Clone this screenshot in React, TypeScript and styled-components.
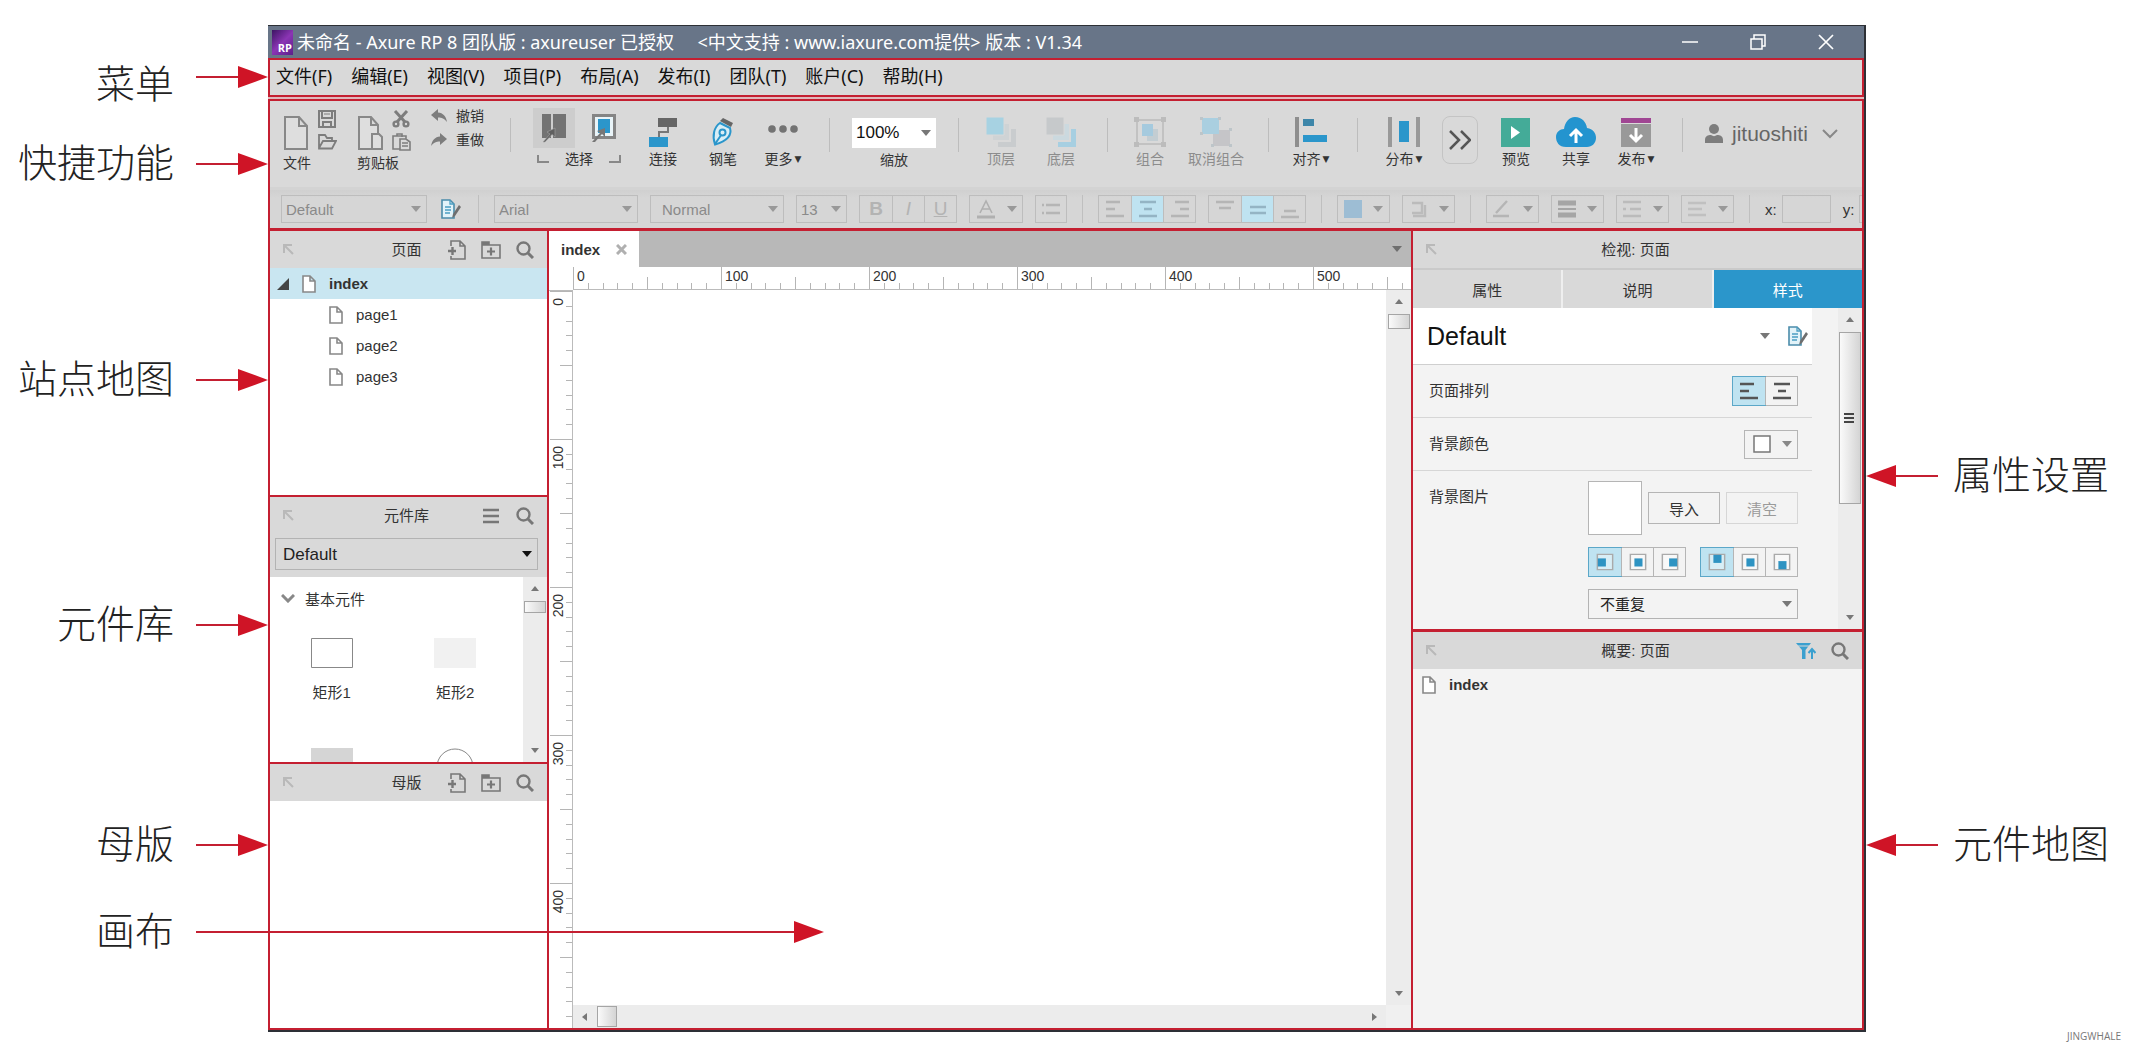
import React from 'react';
import styled, { createGlobalStyle, css } from 'styled-components';

const RED = '#c41f31';
const ARROW_RED = '#cf1426';
const BLUE = '#2b96cb';
const GRAY = '#7d7d7d';
const UI_FONT = '"Liberation Sans", "Noto Sans CJK SC", sans-serif';
const SYSTEM_FONT = '"Noto Sans", "Noto Sans CJK SC", sans-serif';

const GlobalStyle = createGlobalStyle`
  * { box-sizing: border-box; }
  body { margin: 0; background: #fff; color: #333; font-family: ${UI_FONT}; font-size: 15px; }
  button, input, select { font: inherit; color: inherit; margin: 0; padding: 0; border: 0; background: none; border-radius: 0; }
  button { display: inline-flex; align-items: center; justify-content: center; }
  svg { display: block; flex: none; }
  h2, ul { margin: 0; padding: 0; list-style: none; font-weight: normal; }
`;

/* ---------- page and callouts ---------- */

const Page = styled.div`
  display: grid;
  grid-template-columns: 268px minmax(0, 1fr) 264px;
  min-height: 100vh;
  padding-top: 25px;
`;

const CalloutList = styled.aside`
  display: flex;
  flex-direction: column;
`;

const Callout = styled.div<{ $gap: number; $side?: 'left' | 'right' }>`
  display: flex;
  align-items: center;
  height: 56px;
  margin-top: ${p => p.$gap}px;
  flex: none;
  flex-direction: ${p => (p.$side === 'right' ? 'row-reverse' : 'row')};
  justify-content: flex-end;
  gap: ${p => (p.$side === 'right' ? 15 : 22)}px;
  white-space: nowrap;
`;

const CalloutLabel = styled.span<{ $low?: boolean }>`
  flex: 1;
  padding: ${p => (p.$low ? '8px 0 0' : '0 0 8px')};
  font: 300 39px/48px "Noto Sans CJK SC", sans-serif;
  color: #222;
  text-align: right;
  ${CalloutList}:last-of-type & { text-align: left; }
`;

const Reach = styled.span`
  width: 72px;
  flex: none;
  position: relative;
  z-index: 2;
  display: flex;
  pointer-events: none;
`;

const Shaft = styled.span<{ $length: number }>`
  width: ${p => p.$length}px;
  height: 2px;
  flex: none;
  align-self: center;
  background: ${RED};
`;

function Arrow({ length = 42, back = false }: { length?: number; back?: boolean }) {
  const head = (
    <svg width="30" height="22" viewBox="0 0 30 22">
      <path d={back ? 'M30 0V22L0 11z' : 'M0 0V22L30 11z'} fill={ARROW_RED} />
    </svg>
  );
  return (
    <Reach>
      {back && head}
      <Shaft $length={length} />
      {!back && head}
    </Reach>
  );
}

const Credit = styled.footer`
  margin: auto 9px 7px 0;
  text-align: right;
  font: 10px/14px "Open Sans", sans-serif;
  color: #777;
`;

/* ---------- application window ---------- */

const Window = styled.main`
  display: flex;
  flex-direction: column;
  min-width: 0;
  margin-bottom: 18px;
  border: solid #2d3036;
  border-width: 1px 2px 2px 0;
  background: #dfb9bc;
`;

const TitleBar = styled.header`
  display: flex;
  align-items: center;
  gap: 4px;
  height: 32px;
  flex: none;
  padding: 0 28px 0 4px;
  background: #687588;
  color: #fff;
  font: 18px/32px ${SYSTEM_FONT};
  white-space: pre;
`;

const WindowButtons = styled.div`
  display: flex;
  gap: 48px;
  margin-left: auto;
  button { width: 20px; height: 32px; }
`;

const AppBadge = styled.span`
  display: flex;
  align-items: flex-end;
  justify-content: flex-end;
  width: 21px;
  height: 25px;
  padding-right: 1px;
  background: linear-gradient(135deg, #3c1463, #8b35b4 50%, #5c1f8b);
  font: 700 11px/15px "Open Sans", sans-serif;
`;

const MenuBar = styled.nav`
  display: flex;
  align-items: center;
  gap: 19px;
  height: 39px;
  flex: none;
  margin-bottom: 2px;
  padding: 0 6px 4px;
  border: 2px solid ${RED};
  background: #d9d9d9;
  color: #111;
  font: 18px/24px ${SYSTEM_FONT};
  white-space: nowrap;
`;

const Toolbars = styled.section`
  flex: none;
  border: solid ${RED};
  border-width: 2px 2px 0;
  background: #d9d9d9;
  overflow: hidden;
  white-space: nowrap;
`;

const ToolRow = styled.div`
  display: flex;
  height: 86px;
  padding: 7px 16px 0 13px;
  font-size: 14px;
  line-height: 16px;
`;

const Divider = styled.i<{ $before: number; $after: number }>`
  flex: none;
  width: 1px;
  height: 34px;
  margin: 10px ${p => p.$after}px 0 ${p => p.$before}px;
  background: #bdbdbd;
`;

const Tool = styled.button<{ $wide?: boolean }>`
  flex: none;
  flex-direction: column;
  justify-content: flex-start;
  gap: 4px;
  width: ${p => (p.$wide ? 72 : 60)}px;
  height: 72px;
  padding-top: 9px;
  &:disabled { color: #8c8c8c; }
`;

const Caret = styled.span`
  margin-left: 2px;
  font: 9px/16px "DejaVu Sans", sans-serif;
`;

const ToolLabel = styled.span`
  display: flex;
`;

const FileCluster = styled.div`
  display: grid;
  grid-template-columns: 26px 20px;
  column-gap: 8px;
  flex: none;
  height: 72px;
  margin-right: 20px;
  grid-template-rows: 22px 24px 18px;
  align-items: center;
  > :first-child { grid-row: 1 / 3; align-self: end; height: 42px; }
  > :last-child { grid-column: 1 / 3; line-height: 18px; }
`;

const UndoColumn = styled.div`
  display: flex;
  flex-direction: column;
  gap: 8px;
  flex: none;
  width: 57px;
  button { gap: 9px; height: 16px; justify-content: flex-start; }
`;

const SelectModes = styled.fieldset`
  display: grid;
  grid-template-columns: 42px 42px;
  grid-template-rows: 40px 22px;
  justify-content: space-between;
  flex: none;
  width: 92px;
  margin: 0 8px 0 0;
  padding: 0;
  border: 0;
`;

const ModeButton = styled.button<{ $on?: boolean }>`
  height: 40px;
  background: ${p => (p.$on ? '#cdcdcd' : 'transparent')};
`;

const ModeLabel = styled.span`
  grid-column: 1 / 3;
  display: flex;
  align-items: center;
  justify-content: space-between;
  padding: 0 4px;
  line-height: 22px;
`;

const ZoomField = styled.label`
  display: flex;
  flex-direction: column;
  align-items: center;
  gap: 4px;
  flex: none;
  width: 84px;
  padding-top: 10px;
`;

const MoreTools = styled.button`
  flex: none;
  width: 36px;
  height: 48px;
  margin: 8px 8px 0;
  border: 1px solid #c4c4c4;
  border-radius: 8px;
`;

const Account = styled.button`
  gap: 9px;
  height: 52px;
  color: #666;
  font-size: 21px;
  svg:last-child { margin-left: 5px; }
`;

/* ---------- format row ---------- */

const FormatRow = styled.div`
  display: flex;
  align-items: center;
  gap: 12px;
  height: 41px;
  padding-left: 11px;
  border-top: 3px solid #d3d3d3;
  background: linear-gradient(#d0d0d0, #d6d6d6 8px);
  > * { flex: none; }
`;

const FormatDivider = styled.i`
  width: 1px;
  height: 28px;
  margin: 0 3px;
  background: #bfbfbf;
`;

const SelectBox = styled.span<{ $w?: number; $h: number; $tone: 'flat' | 'light' | 'plain'; $pad: number; $size?: number }>`
  display: grid;
  align-items: center;
  width: ${p => (p.$w ? `${p.$w}px` : '100%')};
  height: ${p => p.$h}px;
  font-size: ${p => p.$size || 15}px;
  ${p => p.$tone === 'flat' && css`border: 1px solid #bdbdbd; color: #8a8a8a;`}
  ${p => p.$tone === 'light' && css`background: #fff; color: #111;`}
  ${p => p.$tone === 'plain' && css`border: 1px solid #b3b3b3; color: #222;`}
  select {
    grid-area: 1 / 1;
    width: 100%;
    height: 100%;
    padding-left: ${p => p.$pad}px;
    appearance: none;
    opacity: 1;
  }
  svg { grid-area: 1 / 1; justify-self: end; margin-right: 5px; pointer-events: none; }
`;

function Dropdown(props: { label: string; value: string; w?: number; h?: number; tone?: 'flat' | 'light' | 'plain'; pad?: number; size?: number; arrow?: string; disabled?: boolean }) {
  return (
    <SelectBox $w={props.w} $h={props.h || 28} $tone={props.tone || 'flat'} $pad={props.pad ?? 4} $size={props.size}>
      <select aria-label={props.label} disabled={props.disabled} defaultValue={props.value}>
        <option>{props.value}</option>
      </select>
      <Down color={props.arrow || '#999'} />
    </SelectBox>
  );
}

const Segments = styled.div<{ $cell: number; $h: number; $border: string }>`
  display: flex;
  height: ${p => p.$h}px;
  border: 1px solid ${p => p.$border};
  button { width: ${p => p.$cell}px; height: 100%; }
  button + button { border-left: 1px solid ${p => p.$border}; }
`;

const Segment = styled.button<{ $on?: boolean; $outlined?: boolean }>`
  background: ${p => (p.$on ? '#bfe3f1' : 'transparent')};
  box-shadow: ${p => (p.$on && p.$outlined ? '0 0 0 1px #5ba7c8' : 'none')};
  font: 400 19px/24px ${UI_FONT};
  color: #b3b3b3;
`;

const FormatButton = styled.button<{ $w: number; $frame?: boolean }>`
  width: ${p => p.$w}px;
  height: 28px;
  border: ${p => (p.$frame ? '1px solid #bdbdbd' : '0')};
  justify-content: space-around;
`;

const Coordinate = styled.label`
  display: flex;
  align-items: center;
  gap: 5px;
  input { width: 49px; height: 28px; border: 1px solid #bdbdbd; }
`;

/* ---------- work area ---------- */

const Body = styled.div`
  flex: 1;
  display: grid;
  grid-template-columns: 277px minmax(0, 1fr) 449px;
  gap: 2px;
  min-height: 0;
  border: 2px solid ${RED};
  border-top-width: 3px;
  background: ${RED};
`;

const LeftColumn = styled.div`
  display: grid;
  grid-template-rows: 264px 265px minmax(200px, 1fr);
  gap: 2px;
`;

const RightColumn = styled.div`
  display: grid;
  grid-template-rows: 398px minmax(200px, 1fr);
  gap: 3px;
`;

const Panel = styled.section<{ $gray?: boolean }>`
  display: flex;
  flex-direction: column;
  min-height: 0;
  overflow: hidden;
  background: ${p => (p.$gray ? '#f3f3f3' : '#fff')};
`;

const PanelHeader = styled.header`
  display: grid;
  grid-template-columns: 22px 1fr 22px;
  align-items: center;
  flex: none;
  height: 37px;
  padding: 0 12px 0 8px;
  background: #d9d9d9;
  h2 { grid-area: 1 / 2; font-size: 15px; line-height: 22px; text-align: center; }
  > button { grid-area: 1 / 1; }
`;

const HeaderActions = styled.div`
  grid-area: 1 / 2 / 2 / 4;
  justify-self: end;
  display: flex;
  gap: 14px;
  button { width: 20px; height: 24px; }
`;

const TreeItem = styled.li<{ $depth: number; $on?: boolean }>`
  display: flex;
  align-items: center;
  gap: 13px;
  height: 31px;
  padding-left: ${p => (p.$depth ? 59 : 7)}px;
  background: ${p => (p.$on ? '#c9e6f1' : 'transparent')};
  font-weight: ${p => (p.$on ? 700 : 400)};
`;

const LibraryPicker = styled.div`
  flex: none;
  height: 43px;
  padding: 4px 9px 0 5px;
  background: #d9d9d9;
`;

const LibraryBody = styled.div`
  display: flex;
  flex: 1;
  min-height: 0;
`;

const Shapes = styled.div`
  flex: 1;
  display: grid;
  grid-template-columns: 1fr 1fr;
  grid-template-rows: 42px 110px 60px;
  overflow: hidden;
`;

const ShapeGroup = styled.button`
  grid-column: 1 / 3;
  justify-content: flex-start;
  gap: 10px;
  padding-left: 11px;
`;

const Shape = styled.button`
  flex-direction: column;
  justify-content: flex-start;
  gap: 14px;
  padding: 19px 3px 0 0;
  line-height: 22px;
  &:nth-child(odd) { padding-right: 9px; }
`;

const Track = styled.div<{ $horizontal?: boolean }>`
  display: flex;
  flex-direction: ${p => (p.$horizontal ? 'row' : 'column')};
  align-items: center;
  flex: none;
  ${p => (p.$horizontal ? 'height: 23px; padding: 0 8px;' : 'width: 24px; padding: 8px 0;')}
  gap: 8px;
  background: #ececec;
  > :last-child { margin-${p => (p.$horizontal ? 'left' : 'top')}: auto; }
`;

const Thumb = styled.i<{ $w: number; $h: number }>`
  display: flex;
  align-items: center;
  justify-content: center;
  flex: none;
  width: ${p => p.$w}px;
  height: ${p => p.$h}px;
  border: 1px solid #a5a5a5;
  background: linear-gradient(90deg, #fafafa, #d4d4d4);
`;

/* ---------- canvas ---------- */

const TabStrip = styled.div`
  display: flex;
  flex: none;
  height: 36px;
  padding-right: 8px;
  background: #b8b8b8;
  align-items: center;
  justify-content: space-between;
`;

const DocumentTab = styled.div`
  display: flex;
  align-items: center;
  gap: 16px;
  width: 90px;
  height: 36px;
  padding-left: 12px;
  background: #fff;
  font-weight: 700;
`;

const CanvasGrid = styled.div`
  flex: 1;
  display: grid;
  grid-template: 23px minmax(0, 1fr) 23px / 24px minmax(0, 1fr) 25px;
  min-height: 0;
`;

const TopRuler = styled.div`
  grid-area: 1 / 2 / 2 / 4;
  display: flex;
  overflow: hidden;
  border-bottom: 1px solid #bbb;
`;

const SideRuler = styled.div`
  grid-area: 2 / 1 / 4 / 2;
  display: flex;
  flex-direction: column;
  height: 0;
  min-height: 100%;
  overflow: hidden;
  border-right: 1px solid #bbb;
  border-top: 1px solid #bbb;
`;

const RulerCell = styled.div<{ $side?: boolean }>`
  display: grid;
  flex: none;
  width: ${p => (p.$side ? 23 : 148)}px;
  height: ${p => (p.$side ? 148 : 22)}px;
  svg, span { grid-area: 1 / 1; }
  span {
    font-size: 14px;
    line-height: 18px;
    ${p => (p.$side
      ? 'writing-mode: vertical-rl; transform: rotate(180deg); justify-self: start; align-self: start; padding-bottom: 7px;'
      : 'padding-left: 4px;')}
  }
`;

const tickLength = (i: number) => (i === 0 ? 22 : i === 5 ? 12 : 6);

function Ruler({ side, marks }: { side?: boolean; marks: number[] }) {
  const Frame = side ? SideRuler : TopRuler;
  const path = Array.from({ length: 10 }, (_, i) => {
    const at = Math.round(i * 14.8) + 0.5;
    return side ? `M${23 - tickLength(i)} ${at}H23` : `M${at} ${22 - tickLength(i)}V22`;
  }).join('');
  return (
    <Frame>
      {marks.map(m => (
        <RulerCell key={m} $side={side}>
          <svg width={side ? 23 : 148} height={side ? 148 : 22}>
            <path d={path} stroke="#b5b5b5" />
          </svg>
          <span>{m}</span>
        </RulerCell>
      ))}
    </Frame>
  );
}

const SideTrack = styled(Track)`grid-area: 2 / 3; width: auto;`;
const BottomTrack = styled(Track)`grid-area: 3 / 2;`;
const Corner = styled.i`grid-area: 3 / 3; background: #f0f0f0;`;

/* ---------- inspector ---------- */

const InspectorTabs = styled.div`
  display: grid;
  grid-template-columns: repeat(3, 1fr);
  gap: 2px;
  flex: none;
  height: 40px;
  border-top: 2px solid #cacaca;
  background: #efefef;
`;

const InspectorTab = styled.button<{ $on?: boolean }>`
  background: ${p => (p.$on ? BLUE : '#d9d9d9')};
  color: ${p => (p.$on ? '#fff' : '#333')};
`;

const InspectorBody = styled.div`
  display: flex;
  flex: 1;
  min-height: 0;
`;

const Properties = styled.div`
  flex: 1;
  padding-right: 26px;
`;

const StyleRow = styled.div`
  display: flex;
  align-items: center;
  height: 57px;
  padding-right: 4px;
  background: #fff;
  border-bottom: 1px solid #cfcfcf;
  gap: 13px;
`;

const Property = styled.div<{ $last?: boolean }>`
  display: flex;
  justify-content: space-between;
  align-items: ${p => (p.$last ? 'flex-start' : 'center')};
  height: ${p => (p.$last ? 'auto' : '53px')};
  padding: ${p => (p.$last ? '10px' : '0')} 14px 0 16px;
  border-bottom: ${p => (p.$last ? 0 : 1)}px solid #d6d6d6;
  > span { line-height: ${p => (p.$last ? 32 : 22)}px; }
`;

const ImageOptions = styled.div`
  display: flex;
  flex-direction: column;
  gap: 12px;
  width: 210px;
`;

const OptionLine = styled.div`
  display: flex;
  align-items: center;
  justify-content: space-between;
`;

const Preview = styled.i`
  width: 54px;
  height: 54px;
  border: 1px solid #b5b5b5;
  background: #fff;
`;

const PushButton = styled.button`
  width: 72px;
  height: 32px;
  border: 1px solid #b5b5b5;
  &:disabled { border-color: #d6d6d6; color: #9a9a9a; }
`;

const ColorButton = styled.button`
  justify-content: space-between;
  width: 54px;
  height: 29px;
  padding: 0 5px 0 8px;
  border: 1px solid #b5b5b5;
`;

const OutlineRow = styled.div`
  display: flex;
  align-items: center;
  gap: 13px;
  height: 31px;
  padding-left: 9px;
  font-weight: 700;
`;

/* ---------- icons ---------- */

const Down = ({ color = '#888', w = 10 }: { color?: string; w?: number }) => (
  <svg width={w} height="6" viewBox="0 0 10 6"><path d="M0 0H10L5 6z" fill={color} /></svg>
);
const Triangle = ({ d }: { d: string }) => (
  <svg width="8" height="8" viewBox="0 0 8 8"><path d={d} fill="#777" /></svg>
);
const UP = 'M0 6H8L4 1z';
const DOWN = 'M0 2H8L4 7z';

const PageIcon = ({ w = 14, h = 18 }: { w?: number; h?: number }) => (
  <svg width={w} height={h} viewBox="0 0 14 18" fill="#fff" stroke="#888" strokeWidth="1.6">
    <path d="M1 1H8L13 6V17H1zM8 1V6H13" />
  </svg>
);
const BigPage = () => (
  <svg width="26" height="34" viewBox="0 0 26 34" fill="#dedede" stroke="#888" strokeWidth="2">
    <path d="M2 1H16L24 10V33H2zM16 1V10H24" />
  </svg>
);
const BigPaste = () => (
  <svg width="26" height="34" viewBox="0 0 26 34" fill="#dedede" stroke="#888" strokeWidth="2">
    <path d="M2 1H14L21 9V33H2zM14 1V9H21" />
    <path d="M15 18H22L25 21V33H15z" />
  </svg>
);
const SaveIcon = () => (
  <svg width="18" height="18" viewBox="0 0 18 18" fill="none" stroke={GRAY} strokeWidth="2">
    <path d="M1 1H17V17H1zM4 1V8H14V1M5 17V12H13V17" /><path d="M6 4H12" strokeWidth="1" />
  </svg>
);
const FolderIcon = () => (
  <svg width="20" height="16" viewBox="0 0 20 16" fill="none" stroke={GRAY} strokeWidth="1.8">
    <path d="M2 14V1H8L10 4H15V7M2 14L6 7H19L15 14.5H2z" />
  </svg>
);
const CutIcon = () => (
  <svg width="18" height="18" viewBox="0 0 18 18" fill="none" stroke={GRAY} strokeWidth="2.4">
    <path d="M3 1L13 12M15 1L5 12" strokeWidth="3" /><circle cx="4" cy="14" r="2.4" /><circle cx="14" cy="14" r="2.4" />
  </svg>
);
const PasteIcon = () => (
  <svg width="19" height="18" viewBox="0 0 19 18" fill="none" stroke={GRAY} strokeWidth="1.6">
    <path d="M8 16H1V3H14V6M5 3V1H10V4M8 6H14L18 9V17H8zM10 10H16M10 13H16" />
  </svg>
);
const TurnIcon = ({ flip }: { flip?: boolean }) => (
  <svg width="16" height="14" viewBox="0 0 16 14">
    <path transform={flip ? 'matrix(-1 0 0 1 16 0)' : undefined} d="M0 6L7 0V3.5C12 4 15 7 16 13C13 9.500 11 8.500 7 8.500V12z" fill={GRAY} />
  </svg>
);
const IntersectIcon = () => (
  <svg width="26" height="30" viewBox="0 0 26 30">
    <path d="M1 1H10V25H1zM12 1H25V25H12z" fill="#737373" />
    <path d="M2 29L9 21L6 19L14 15V24L11 21.500L4 29z" fill="#606060" stroke="#a5a5a5" strokeWidth=".6" />
  </svg>
);
const ContainIcon = () => (
  <svg width="26" height="30" viewBox="0 0 26 30">
    <path d="M2.500 2.500H23.500V24.500H2.500z" fill="#e9f4f8" stroke="#858585" strokeWidth="3" />
    <path d="M7 6H19V20H7z" fill={BLUE} />
    <path d="M1 29L9 20L6 18L14 15V24L11 21L4 29z" fill="#777" />
  </svg>
);
const ConnectIcon = () => (
  <svg width="30" height="30" viewBox="0 0 30 30">
    <path d="M20 9V15H11V21" fill="none" stroke="#777" strokeWidth="2" />
    <path d="M10 1H29V10H10z" fill="#666" /><path d="M1 20H20V30H1z" fill={BLUE} />
  </svg>
);
const PenIcon = () => (
  <svg width="26" height="30" viewBox="0 0 26 30">
    <path d="M13 1L23 6L21 10L10 4z" fill="#666" />
    <path d="M10 6L20 11C22 18 17 24 5 27.500C2 19 4 10 10 6z" fill="#d9eef6" stroke={BLUE} strokeWidth="2" />
    <path d="M5 27L11.500 17.500" stroke={BLUE} strokeWidth="2" /><circle cx="12.500" cy="15.500" r="3" fill="#d9eef6" stroke={BLUE} strokeWidth="2" />
  </svg>
);
const DotsIcon = () => (
  <svg width="30" height="30" viewBox="0 0 30 30" fill="#737373">
    <circle cx="4" cy="12" r="3.800" /><circle cx="15" cy="12" r="3.800" /><circle cx="26" cy="12" r="3.800" />
  </svg>
);
const LayersIcon = ({ back }: { back?: boolean }) => (
  <svg width="30" height="30" viewBox="0 0 30 30">
    <path d="M12 12H30V30H12z" fill={back ? '#a7cfe1' : '#c9ccce'} />
    <path d="M6 6H24V24H6z" fill={back ? '#cbd9df' : '#cfd3d5'} stroke="#d9d9d9" strokeWidth="2" />
    <path d="M0 0H18V18H0z" fill={back ? '#c6c9cb' : '#a7d2e2'} stroke="#d9d9d9" />
  </svg>
);
const GroupIcon = () => (
  <svg width="32" height="30" viewBox="0 0 32 30">
    <path d="M3 3H29V27H3z" fill="none" stroke="#c2c2c2" strokeWidth="2" />
    <path d="M0 0H5V5H0zM27 0H32V5H27zM0 25H5V30H0zM27 25H32V30H27z" fill="#bcbcbc" />
    <path d="M13 12H24V24H13z" fill="#c3cdd2" /><path d="M8 7H19V19H8z" fill="#a5cade" />
  </svg>
);
const UngroupIcon = () => (
  <svg width="32" height="30" viewBox="0 0 32 30">
    <path d="M13 13H30V29H13z" fill="#c5c5c8" /><path d="M2 1H19V17H2z" fill="#aacfe0" />
    <path d="M0 0H3V3H0zM18 0H21V3H18zM0 15H3V18H0zM29 11H32V14H29zM29 27H32V30H29zM11 27H14V30H11z" fill="#bdc5c9" />
  </svg>
);
const AlignIcon = () => (
  <svg width="32" height="30" viewBox="0 0 32 30">
    <path d="M0 0H4V30H0z" fill="#8e8e8e" /><path d="M8 2H19V9H8z" fill="#3d86a9" /><path d="M8 18H32V25H8z" fill={BLUE} />
  </svg>
);
const DistributeIcon = () => (
  <svg width="32" height="30" viewBox="0 0 32 30">
    <path d="M0 0H4V30H0zM28 0H32V30H28z" fill="#999" /><path d="M11 4H21V25H11z" fill={BLUE} />
  </svg>
);
const PlayIcon = () => (
  <svg width="30" height="30" viewBox="0 0 30 30"><path d="M0 1H29V30H0z" fill="#44ab98" /><path d="M10 9L19 15.500L10 22z" fill="#fff" /></svg>
);
const CloudIcon = () => (
  <svg width="40" height="30" viewBox="0 0 40 30">
    <path d="M10 30C3 30 0 25 0 20C0 15 4 12 8 12C9 5 13 0 19 0C26 0 30 5 31 11C37 12 40 16 40 21C40 26 36 30 31 30z" fill="#2394cf" />
    <path d="M20 26V14M14 19L20 13L26 19" fill="none" stroke="#fff" strokeWidth="3" />
  </svg>
);
const PublishIcon = () => (
  <svg width="30" height="30" viewBox="0 0 30 30">
    <path d="M0 1H30V6H0z" fill="#a04693" /><path d="M0 7H30V30H0z" fill="#999" />
    <path d="M15 11V24M9 18L15 24L21 18" fill="none" stroke="#fff" strokeWidth="3" />
  </svg>
);
const UserIcon = () => (
  <svg width="18" height="20" viewBox="0 0 18 20" fill={GRAY}>
    <circle cx="9" cy="5" r="5" /><path d="M0 19V16C0 12 3 11 6 11C8 12.500 10 12.500 12 11C15 11 18 12 18 16V19z" />
  </svg>
);
const StyleIcon = () => (
  <svg width="20" height="20" viewBox="0 0 20 20">
    <path d="M1 1H9L13 5V19H1z" fill="#e2f3f9" stroke="#4b8caa" strokeWidth="1.600" /><path d="M9 1V5H13M4 8H10M4 11H10M4 14H9" stroke="#4b9fc2" strokeWidth="1.300" fill="none" />
    <path d="M11 19L12 15L18 6L20 8L14 17z" fill="#6f6f6f" />
  </svg>
);
const CollapseIcon = () => (
  <svg width="12" height="12" viewBox="0 0 12 12" fill="none" stroke="#b9b9b9" strokeWidth="2"><path d="M1 9V1H9M2 2L10 10" /></svg>
);
const AddPageIcon = () => (
  <svg width="18" height="20" viewBox="0 0 18 20" fill="none" stroke="#777" strokeWidth="1.600">
    <path d="M3 6V1H12L17 6V19H3V16M12 1V6H17" /><path d="M0 11H8M4.500 7V15" strokeWidth="2.400" />
  </svg>
);
const AddFolderIcon = () => (
  <svg width="20" height="18" viewBox="0 0 20 18" fill="none" stroke="#777" strokeWidth="1.600">
    <path d="M1 4H19V17H1zM1 4V1H8V4" /><path d="M1 2.500H8" strokeWidth="3" /><path d="M6 10.500H14M10 6.500V14.500" strokeWidth="2.200" />
  </svg>
);
const SearchIcon = () => (
  <svg width="18" height="18" viewBox="0 0 18 18" fill="none" stroke="#777" strokeWidth="2.400">
    <circle cx="7.500" cy="7.500" r="6" /><path d="M11.500 11.500L17 17" strokeWidth="3" />
  </svg>
);
const MenuIcon = () => (
  <svg width="16" height="16" viewBox="0 0 16 16" stroke="#777" strokeWidth="2.400"><path d="M0 2H16M0 8H16M0 14H16" /></svg>
);
const FilterIcon = () => (
  <svg width="20" height="16" viewBox="0 0 20 16">
    <path d="M0 0H15L9.500 7V16H6V7z" fill="#3ba0cf" /><path d="M2 3H13" stroke="#d9d9d9" /><path d="M16 16V7M12.500 10L16 6L19.500 10" fill="none" stroke="#3ba0cf" strokeWidth="2" />
  </svg>
);
const Lines = ({ d, color = '#b5b5b5' }: { d: string; color?: string }) => (
  <svg width="20" height="20" viewBox="0 0 20 20" stroke={color} strokeWidth="2.400" fill="none"><path d={d} /></svg>
);
const LEFT = 'M1 3H15M1 10H10M1 17H19';
const CENTER = 'M2 3H18M6 10H14M1 17H19';
const RIGHT = 'M5 3H19M10 10H19M1 17H19';
const Anchor = ({ x, y }: { x: number; y: number }) => (
  <svg width="18" height="18" viewBox="0 0 20 20">
    <path d="M1.500 1.500H18.500V18.500H1.500z" fill="#fff" fillOpacity=".4" stroke="#aaa" strokeWidth="1.600" /><path d={`M${x} ${y}h9v9h-9z`} fill="#2e93c2" />
  </svg>
);

const ActionIcons = () => (
  <HeaderActions>
    <button aria-label="添加页面"><AddPageIcon /></button>
    <button aria-label="添加文件夹"><AddFolderIcon /></button>
    <button aria-label="搜索"><SearchIcon /></button>
  </HeaderActions>
);

function Header({ title, children }: { title: string; children?: React.ReactNode }) {
  return (
    <PanelHeader>
      <button aria-label="折叠"><CollapseIcon /></button>
      <h2>{title}</h2>
      {children}
    </PanelHeader>
  );
}

function ToolButton({ icon, label, menu, off, wide }: { icon: React.ReactNode; label: string; menu?: boolean; off?: boolean; wide?: boolean }) {
  return (
    <Tool disabled={off} $wide={wide}>
      {icon}
      <ToolLabel>{label}{menu && <Caret>▼</Caret>}</ToolLabel>
    </Tool>
  );
}

/* ---------- sections ---------- */

const MENUS = ['文件(F)', '编辑(E)', '视图(V)', '项目(P)', '布局(A)', '发布(I)', '团队(T)', '账户(C)', '帮助(H)'];

function MainToolbar() {
  return (
    <ToolRow>
      <FileCluster>
        <button aria-label="新建"><BigPage /></button>
        <button aria-label="保存"><SaveIcon /></button>
        <button aria-label="打开"><FolderIcon /></button>
        <span>文件</span>
      </FileCluster>
      <FileCluster>
        <button aria-label="粘贴"><BigPaste /></button>
        <button aria-label="剪切"><CutIcon /></button>
        <button aria-label="复制"><PasteIcon /></button>
        <span>剪贴板</span>
      </FileCluster>
      <UndoColumn>
        <button><TurnIcon />撤销</button>
        <button><TurnIcon flip />重做</button>
      </UndoColumn>
      <Divider $before={22} $after={22} />
      <SelectModes>
        <ModeButton $on aria-label="相交选择"><IntersectIcon /></ModeButton>
        <ModeButton aria-label="包含选择"><ContainIcon /></ModeButton>
        <ModeLabel>
          <svg width="12" height="8" fill="none" stroke="#888" strokeWidth="2"><path d="M1 0V7H12" /></svg>
          选择
          <svg width="12" height="8" fill="none" stroke="#888" strokeWidth="2"><path d="M11 0V7H0" /></svg>
        </ModeLabel>
      </SelectModes>
      <ToolButton icon={<ConnectIcon />} label="连接" />
      <ToolButton icon={<PenIcon />} label="钢笔" />
      <ToolButton icon={<DotsIcon />} label="更多" menu />
      <Divider $before={16} $after={22} />
      <ZoomField>
        <Dropdown label="缩放" value="100%" w={84} h={30} tone="light" size={17} arrow="#777" />
        缩放
      </ZoomField>
      <Divider $before={22} $after={12} />
      <ToolButton icon={<LayersIcon />} label="顶层" off />
      <ToolButton icon={<LayersIcon back />} label="底层" off />
      <Divider $before={16} $after={12} />
      <ToolButton icon={<GroupIcon />} label="组合" off />
      <ToolButton icon={<UngroupIcon />} label="取消组合" off wide />
      <Divider $before={16} $after={12} />
      <ToolButton icon={<AlignIcon />} label="对齐" menu />
      <Divider $before={16} $after={16} />
      <ToolButton icon={<DistributeIcon />} label="分布" menu />
      <MoreTools aria-label="更多工具">
        <svg width="22" height="20" viewBox="0 0 22 20" fill="none" stroke="#555" strokeWidth="2.500"><path d="M1 1L10 10L1 19M12 1L21 10L12 19" /></svg>
      </MoreTools>
      <ToolButton icon={<PlayIcon />} label="预览" />
      <ToolButton icon={<CloudIcon />} label="共享" />
      <ToolButton icon={<PublishIcon />} label="发布" menu />
      <Divider $before={16} $after={22} />
      <Account>
        <UserIcon />jituoshiti
        <svg width="16" height="10" viewBox="0 0 16 10" fill="none" stroke="#888" strokeWidth="2"><path d="M1 1L8 8L15 1" /></svg>
      </Account>
    </ToolRow>
  );
}

function FormatToolbar() {
  return (
    <FormatRow>
      <Dropdown label="样式" value="Default" w={146} />
      <FormatButton $w={24} aria-label="样式管理"><StyleIcon /></FormatButton>
      <FormatDivider />
      <Dropdown label="字体" value="Arial" w={144} />
      <Dropdown label="字重" value="Normal" w={134} pad={11} />
      <Dropdown label="字号" value="13" w={51} />
      <Segments $cell={32} $h={28} $border="#bdbdbd">
        <Segment><b>B</b></Segment>
        <Segment><i>I</i></Segment>
        <Segment><u>U</u></Segment>
      </Segments>
      <FormatButton $w={54} $frame aria-label="文字颜色">
        <svg width="20" height="20" fill="none" stroke="#b0b0b0" strokeWidth="1.600"><path d="M4 14L10 2L16 14M6 10H14" /><path d="M1 18H19" strokeWidth="3" /></svg>
        <Down color="#999" />
      </FormatButton>
      <FormatButton $w={32} $frame aria-label="项目符号"><Lines d="M1 6H3M5 6H19M1 14H3M5 14H19" /></FormatButton>
      <FormatDivider />
      <Segments $cell={32} $h={28} $border="#bdbdbd">
        <Segment aria-label="左对齐"><Lines d={LEFT} /></Segment>
        <Segment $on aria-label="居中"><Lines d={CENTER} color="#94b4c4" /></Segment>
        <Segment aria-label="右对齐"><Lines d={RIGHT} /></Segment>
      </Segments>
      <Segments $cell={32} $h={28} $border="#bdbdbd">
        <Segment aria-label="顶部"><Lines d="M1 3H19M4 9H16" /></Segment>
        <Segment $on aria-label="中部"><Lines d="M2 8H18M2 14H18" color="#94b4c4" /></Segment>
        <Segment aria-label="底部"><Lines d="M4 12H16M1 18H19" /></Segment>
      </Segments>
      <FormatDivider />
      <FormatButton $w={53} $frame aria-label="填充"><svg width="18" height="18"><path d="M0 0H18V18H0z" fill="#9dbdd4" /></svg><Down color="#999" /></FormatButton>
      <FormatButton $w={53} $frame aria-label="阴影"><Lines d="M4 4H14V14H4M17 6V17H5" color="#bbb" /><Down color="#999" /></FormatButton>
      <FormatDivider />
      <FormatButton $w={53} $frame aria-label="线条颜色"><Lines d="M4 14L15 2M1 17H17" /><Down color="#999" /></FormatButton>
      <FormatButton $w={53} $frame aria-label="线宽">
        <svg width="18" height="18" stroke="#a5a5a5"><path d="M0 3H18" strokeWidth="5" /><path d="M0 9H18" strokeWidth="2" /><path d="M0 15H18" strokeWidth="5" /></svg>
        <Down color="#999" />
      </FormatButton>
      <FormatButton $w={53} $frame aria-label="线型"><Lines d="M1 3H19M1 10H4M8 10H19M1 17H19" color="#bbb" /><Down color="#999" /></FormatButton>
      <FormatButton $w={53} $frame aria-label="箭头"><Lines d="M1 4H19M1 10H15M1 16H19" color="#c0c0c0" /><Down color="#999" /></FormatButton>
      <FormatDivider />
      <Coordinate>x: <input /></Coordinate>
      <Coordinate>y: <input /></Coordinate>
    </FormatRow>
  );
}

function LeftPanels() {
  return (
    <LeftColumn>
      <Panel>
        <Header title="页面"><ActionIcons /></Header>
        <ul>
          <TreeItem $depth={0} $on>
            <svg width="12" height="12"><path d="M12 0V12H0z" fill="#444" /></svg>
            <PageIcon />index
          </TreeItem>
          {['page1', 'page2', 'page3'].map(name => (
            <TreeItem key={name} $depth={1}><PageIcon />{name}</TreeItem>
          ))}
        </ul>
      </Panel>
      <Panel>
        <Header title="元件库">
          <HeaderActions>
            <button aria-label="选项"><MenuIcon /></button>
            <button aria-label="搜索"><SearchIcon /></button>
          </HeaderActions>
        </Header>
        <LibraryPicker><Dropdown label="元件库" value="Default" h={32} tone="plain" pad={7} size={17} arrow="#111" /></LibraryPicker>
        <LibraryBody>
          <Shapes>
            <ShapeGroup>
              <svg width="14" height="9" fill="none" stroke="#888" strokeWidth="3"><path d="M1 1L7 7L13 1" /></svg>
              基本元件
            </ShapeGroup>
            <Shape><svg width="42" height="30"><path d="M.5 .5H41.500V29.500H.5z" fill="#fff" stroke="#888" /></svg>矩形1</Shape>
            <Shape><svg width="42" height="30"><path d="M0 0H42V30H0z" fill="#f1f1f1" /></svg>矩形2</Shape>
            <Shape aria-label="矩形3"><svg width="42" height="30"><path d="M0 0H42V30H0z" fill="#d5d5d5" /></svg></Shape>
            <Shape aria-label="椭圆形"><svg width="38" height="38"><circle cx="19" cy="19" r="18" fill="#fff" stroke="#888" /></svg></Shape>
          </Shapes>
          <Track>
            <Triangle d={UP} />
            <Thumb $w={22} $h={12} />
            <Triangle d={DOWN} />
          </Track>
        </LibraryBody>
      </Panel>
      <Panel>
        <Header title="母版"><ActionIcons /></Header>
      </Panel>
    </LeftColumn>
  );
}

function Canvas() {
  return (
    <Panel>
      <TabStrip>
        <DocumentTab>
          index
          <svg width="11" height="11" stroke="#b0b0b0" strokeWidth="3"><path d="M1 1L10 10M10 1L1 10" /></svg>
        </DocumentTab>
        <Down color="#6f6f6f" w={12} />
      </TabStrip>
      <CanvasGrid>
        <Ruler marks={[0, 100, 200, 300, 400, 500]} />
        <Ruler side marks={[0, 100, 200, 300, 400]} />
        <SideTrack>
          <Triangle d={UP} />
          <Thumb $w={22} $h={15} />
          <Triangle d={DOWN} />
        </SideTrack>
        <BottomTrack $horizontal>
          <Triangle d="M6 0V8L1 4z" />
          <Thumb $w={20} $h={21} />
          <Triangle d="M2 0V8L7 4z" />
        </BottomTrack>
        <Corner />
      </CanvasGrid>
    </Panel>
  );
}

function RightPanels() {
  return (
    <RightColumn>
      <Panel $gray>
        <Header title="检视: 页面" />
        <InspectorTabs>
          <InspectorTab>属性</InspectorTab>
          <InspectorTab>说明</InspectorTab>
          <InspectorTab $on>样式</InspectorTab>
        </InspectorTabs>
        <InspectorBody>
          <Properties>
            <StyleRow>
              <Dropdown label="页面样式" value="Default" h={56} tone="light" pad={14} size={25} arrow="#777" />
              <button aria-label="样式管理"><StyleIcon /></button>
            </StyleRow>
            <Property>
              <span>页面排列</span>
              <Segments $cell={32} $h={30} $border="#b5b5b5">
                <Segment $on $outlined aria-label="左对齐"><Lines d={LEFT} color="#555" /></Segment>
                <Segment aria-label="居中"><Lines d={CENTER} color="#555" /></Segment>
              </Segments>
            </Property>
            <Property>
              <span>背景颜色</span>
              <ColorButton aria-label="背景颜色">
                <svg width="18" height="18"><path d="M1 1H17V17H1z" fill="#fff" stroke="#777" strokeWidth="1.500" /></svg>
                <Down />
              </ColorButton>
            </Property>
            <Property $last>
              <span>背景图片</span>
              <ImageOptions>
                <OptionLine>
                  <Preview />
                  <PushButton>导入</PushButton>
                  <PushButton disabled>清空</PushButton>
                </OptionLine>
                <OptionLine>
                  <Segments $cell={32} $h={30} $border="#b5b5b5">
                    <Segment $on $outlined aria-label="靠左"><Anchor x={2} y={6} /></Segment>
                    <Segment aria-label="水平居中"><Anchor x={6} y={6} /></Segment>
                    <Segment aria-label="靠右"><Anchor x={9} y={6} /></Segment>
                  </Segments>
                  <Segments $cell={32} $h={30} $border="#b5b5b5">
                    <Segment $on $outlined aria-label="靠上"><Anchor x={6} y={2} /></Segment>
                    <Segment aria-label="垂直居中"><Anchor x={6} y={6} /></Segment>
                    <Segment aria-label="靠下"><Anchor x={6} y={9} /></Segment>
                  </Segments>
                </OptionLine>
                <Dropdown label="重复" value="不重复" h={30} tone="plain" pad={11} arrow="#777" />
              </ImageOptions>
            </Property>
          </Properties>
          <Track>
            <Triangle d={UP} />
            <Thumb $w={22} $h={172}>
              <svg width="12" height="12" stroke="#444" strokeWidth="2"><path d="M0 2H10M0 6H10M0 10H10" /></svg>
            </Thumb>
            <Triangle d={DOWN} />
          </Track>
        </InspectorBody>
      </Panel>
      <Panel $gray>
        <Header title="概要: 页面">
          <HeaderActions>
            <button aria-label="筛选"><FilterIcon /></button>
            <button aria-label="搜索"><SearchIcon /></button>
          </HeaderActions>
        </Header>
        <OutlineRow><PageIcon />index</OutlineRow>
      </Panel>
    </RightColumn>
  );
}

const LEFT_CALLOUTS = [
  { text: '菜单', gap: 24, low: true },
  { text: '快捷功能', gap: 31 },
  { text: '站点地图', gap: 160 },
  { text: '元件库', gap: 189 },
  { text: '母版', gap: 164 },
  { text: '画布', gap: 31, length: 598 },
];

const RIGHT_CALLOUTS = [
  { text: '属性设置', gap: 423 },
  { text: '元件地图', gap: 313 },
];

export default function App() {
  return (
    <>
      <GlobalStyle />
      <Page>
        <CalloutList>
          {LEFT_CALLOUTS.map(c => (
            <Callout key={c.text} $gap={c.gap}>
              <CalloutLabel $low={c.low}>{c.text}</CalloutLabel>
              <Arrow length={c.length} />
            </Callout>
          ))}
        </CalloutList>
        <Window>
          <TitleBar>
            <AppBadge>RP</AppBadge>
            <span>{'未命名 - Axure RP 8 团队版 : axureuser 已授权     <中文支持 : www.iaxure.com提供> 版本 : V1.34'}</span>
            <WindowButtons>
              <button aria-label="最小化"><svg width="16" height="16" stroke="#fff" strokeWidth="1.500"><path d="M0 8H16" /></svg></button>
              <button aria-label="还原"><svg width="16" height="16" fill="none" stroke="#fff" strokeWidth="1.500"><path d="M1 5H12V15H1zM4 5V1H15V12H12" /></svg></button>
              <button aria-label="关闭"><svg width="16" height="16" stroke="#fff" strokeWidth="1.700"><path d="M1 1L15 15M15 1L1 15" /></svg></button>
            </WindowButtons>
          </TitleBar>
          <MenuBar>{MENUS.map(m => <button key={m}>{m}</button>)}</MenuBar>
          <Toolbars>
            <MainToolbar />
            <FormatToolbar />
          </Toolbars>
          <Body>
            <LeftPanels />
            <Canvas />
            <RightPanels />
          </Body>
        </Window>
        <CalloutList>
          {RIGHT_CALLOUTS.map(c => (
            <Callout key={c.text} $gap={c.gap} $side="right">
              <CalloutLabel>{c.text}</CalloutLabel>
              <Arrow back />
            </Callout>
          ))}
          <Credit>JINGWHALE</Credit>
        </CalloutList>
      </Page>
    </>
  );
}
